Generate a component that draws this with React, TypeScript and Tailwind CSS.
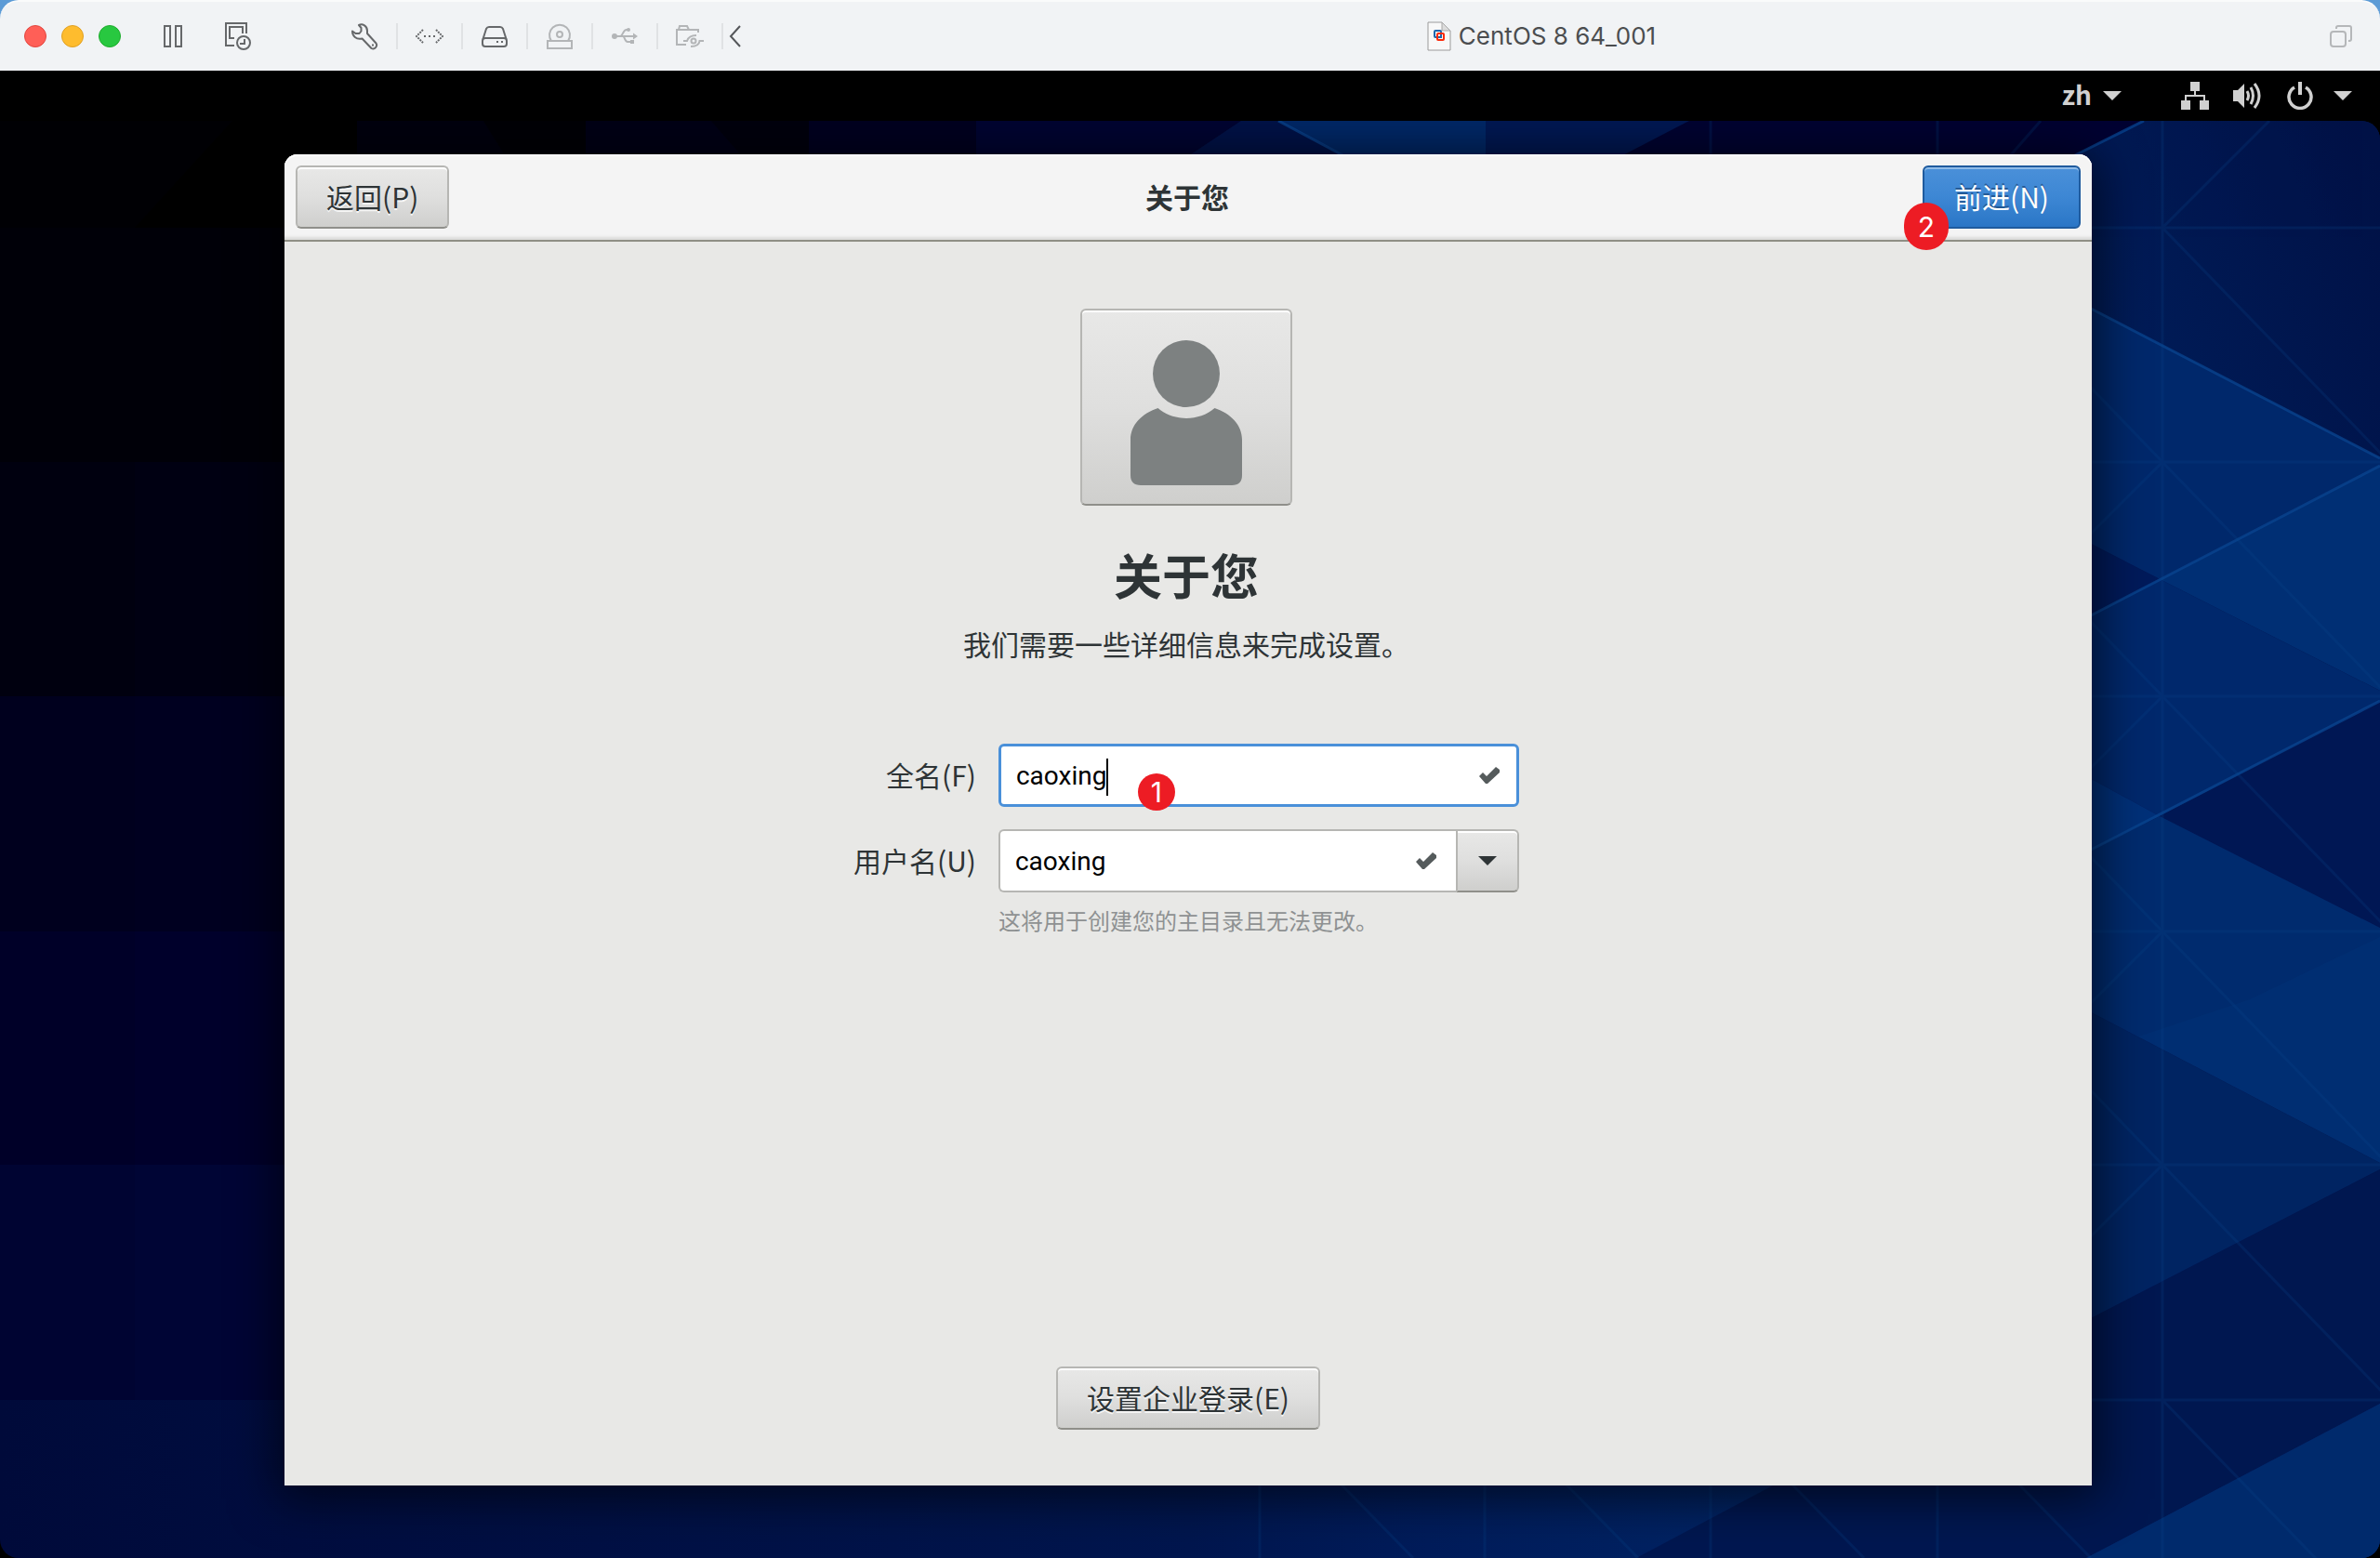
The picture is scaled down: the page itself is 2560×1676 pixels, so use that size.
import type { ReactNode } from "react";

function Wallpaper() {
  const rows = [245, 497, 749, 1002, 1253, 1506];
  const cols = [1355, 1597, 1840, 2084];
  return (
    <svg
      className="absolute inset-0 h-full w-full"
      viewBox="0 130 2560 1546"
      preserveAspectRatio="none"
      aria-hidden="true"
    >
      <defs>
        <linearGradient id="base" x1="0" y1="0" x2="1" y2="0">
          <stop offset="0" stopColor="#000008" />
          <stop offset="0.35" stopColor="#000018" />
          <stop offset="0.55" stopColor="#001040" />
          <stop offset="0.9" stopColor="#001a54" />
          <stop offset="1" stopColor="#001348" />
        </linearGradient>
        <linearGradient id="corner" gradientUnits="userSpaceOnUse" x1="2250" y1="300" x2="2560" y2="180">
          <stop offset="0" stopColor="#001c58" />
          <stop offset="1" stopColor="#001146" />
        </linearGradient>
        <linearGradient id="floor" x1="0" y1="0" x2="1" y2="0">
          <stop offset="0" stopColor="#000a3a" />
          <stop offset="0.5" stopColor="#00164e" />
          <stop offset="0.6" stopColor="#001c5a" />
          <stop offset="0.75" stopColor="#002464" />
        </linearGradient>
      </defs>
      <rect x="0" y="130" width="2560" height="1546" fill="url(#base)" />
      <rect x="0" y="130" width="400" height="115" fill="#000004" />
      <rect x="0" y="245" width="400" height="252" fill="#000008" />
      <rect x="0" y="497" width="400" height="252" fill="#00000f" />
      <rect x="0" y="749" width="400" height="253" fill="#00001e" />
      <rect x="0" y="1002" width="400" height="251" fill="#000028" />
      <rect x="0" y="1253" width="400" height="253" fill="#000432" />
      <rect x="145" y="497" width="200" height="252" fill="#000012" />
      <rect x="145" y="749" width="200" height="253" fill="#000020" />
      <rect x="145" y="1002" width="200" height="251" fill="#00002b" />
      <rect x="145" y="1253" width="200" height="253" fill="#000535" />
      <path d="M250 130H384V245H145z" fill="#000000" />
      <path d="M384 130H520L545 170H384z" fill="#00000e" />
      <path d="M520 130H630V170H545z" fill="#000006" />
      <path d="M630 130H765L800 170H630z" fill="#000016" />
      <path d="M765 130H870V170H800z" fill="#00000d" />
      <path d="M870 130H1050V170H870z" fill="#000020" />
      <path d="M1050 130H1335L1275 170H1050z" fill="#000432" />
      <path d="M1335 130H1375L1450 170H1275z" fill="#001248" />
      <path d="M1375 130H1598V170H1453z" fill="#002868" />
      <path d="M1598 130H1817L1740 170H1598z" fill="#001854" />
      <path d="M1817 130H2306L2226 170H1740z" fill="#000332" />
      <path d="M2306 130H2560V493L2226 320V170z" fill="url(#corner)" />
      <rect x="0" y="1506" width="2560" height="170" fill="url(#floor)" />

      <path d="M2226 320L2560 493V501L2323 623L2226 573z" fill="#00286b" />
      <path d="M2226 573L2323 623L2226 674z" fill="#001a5a" />
      <path d="M2323 623L2560 501V743z" fill="#002f74" />
      <path d="M2226 674L2323 623L2560 743V754L2323 878L2226 825z" fill="#00286c" />
      <path d="M2226 825L2323 878L2226 926z" fill="#003078" />
      <path d="M2323 878L2560 754V998z" fill="#001754" />
      <path d="M2226 926L2323 878L2560 998V1251L2226 1077z" fill="#002b6e" />
      <path d="M2300 1115L2420 1075L2560 1008V1251z" fill="#003074" opacity="0.7" />
      <path d="M2226 1077L2560 1251V1258L2226 1430z" fill="#002462" />
      <path d="M1760 1676L1907 1598L2226 1430L2560 1258V1510L2244 1676z" fill="#001750" />
      <path d="M2244 1676L2560 1510V1676z" fill="#002a6c" />

      <g stroke="#0a4690" strokeWidth="3" fill="none" opacity="0.75">
        <path d="M1375 130L1450 170M2306 130L2226 170M2226 320L2560 493M2226 674L2560 501M2226 926L2560 754" />
      </g>
      <g stroke="#0a4a90" strokeWidth="3" fill="none" opacity="0.2">
        {rows.map((y) => (
          <path key={y} d={`M2226 ${y}H2560M2326 ${y}L2566 ${y + 248}`} />
        ))}
        {rows.slice(1, 5).map((y) => (
          <path key={y} d={`M2226 ${y - 104}L2326 ${y}L2226 ${y + 100}`} />
        ))}
        {cols.map((x) => (
          <path key={x} d={`M${x} 1590V1676M${x + 81} 1590L${x + 165} 1676`} />
        ))}
        <path d="M2326 130V1676M2326 245L2441 130M1840 130V170M2084 130V170M2195 130L2160 170" />
      </g>
    </svg>
  );
}

function ToolCell({ label, children }: { label: string; children: ReactNode }) {
  return (
    <>
      <button type="button" aria-label={label} className="flex h-9 w-[68px] items-center justify-center">
        {children}
      </button>
      <span className="h-7 w-0.5 bg-[#e0e2e4]" />
    </>
  );
}

const dark = "#66686a";
const dim = "#b3b5b7";

function TitleBar() {
  return (
    <header className="bg-gradient-to-br from-[#5c9bd6] via-[#5c9bd6] to-[#6fa3d8]">
      <div className="flex h-[76px] items-center rounded-t-[20px] border-t-2 border-[#fafbfb] bg-[#f1f3f5] pr-[30px] pl-[26px]">
        <div className="flex gap-4">
          <button type="button" aria-label="关闭" className="size-6 rounded-full border border-[#e2463f] bg-[#ff5f57]" />
          <button type="button" aria-label="最小化" className="size-6 rounded-full border border-[#e0a023] bg-[#febc2e]" />
          <button type="button" aria-label="缩放" className="size-6 rounded-full border border-[#1eac2c] bg-[#28c840]" />
        </div>
        <button type="button" aria-label="暂停" className="ml-[46px]">
          <svg width="20" height="24" fill="none" stroke={dark} strokeWidth="2">
            <path d="M1 1h6v22H1zM13 1h6v22h-6z" />
          </svg>
        </button>
        <button type="button" aria-label="快照" className="ml-[46px]">
          <svg width="28" height="30" fill="none" stroke={dark} strokeWidth="2">
            <path d="M10 25H1V1h22v11M10 17H5V5h14v7" />
            <circle cx="20" cy="22" r="7" />
            <path d="M21 18v5h-5" />
          </svg>
        </button>
        <div className="ml-[88px] flex items-center">
          <ToolCell label="设置">
            <svg width="29" height="29" fill="none" stroke={dark} strokeWidth="2" strokeLinejoin="round">
              <path d="M8 2C12 0 17 3 17 8V11L26.500 21.500C28.500 24.500 25 29 21.500 27L11.500 16.500C5 18 1 13.500 1 8.500L4.500 11H8.500L10.500 8.500V5z" />
              <path d="M22 23.500h2" />
            </svg>
          </ToolCell>
          <ToolCell label="网络">
            <svg width="30" height="16" fill="none" stroke={dark} strokeWidth="2">
              <path d="M8 1L1 8L8 15M22 1L29 8L22 15" strokeDasharray="2 1" />
              <path d="M9 8h2M14 8h2M19 8h2" />
            </svg>
          </ToolCell>
          <ToolCell label="硬盘">
            <svg width="28" height="24" fill="none" stroke={dark} strokeWidth="2" strokeLinejoin="round">
              <path d="M1.500 15L5 4Q6 2 8 2H20Q22 2 23 4L26.500 15" />
              <rect x="1" y="14" width="26" height="9" rx="3" />
              <path d="M16 18h2M21 18h2" />
            </svg>
          </ToolCell>
          <ToolCell label="光盘">
            <svg width="28" height="28" fill="none" stroke={dim} strokeWidth="2">
              <path d="M5 19A11 11 0 1 1 23 19" />
              <circle cx="14" cy="12" r="3" />
              <path d="M1 19h26v8H1z" />
            </svg>
          </ToolCell>
          <ToolCell label="USB">
            <svg width="28" height="20" fill="none" stroke={dim} strokeWidth="2">
              <path d="M3 10H24M9 10C12 10 12 3 16 3H18M12 10C14 10 14 16 17 16H20" />
              <g fill={dim} stroke="none">
                <circle cx="3" cy="10" r="3" />
                <circle cx="18" cy="3" r="2" />
                <path d="M20 14h4v4h-4zM23 6.500l5 3.500-5 3.500z" />
              </g>
            </svg>
          </ToolCell>
          <ToolCell label="共享文件夹">
            <svg width="30" height="24" fill="none" stroke={dim} strokeWidth="2">
              <path d="M24 8V5H14L12 1H4L3 5H1V21H11M1 5H14" />
              <circle cx="19" cy="17" r="2.500" />
              <path d="M8 17H12Q14 11 22 11M16 23Q25 23 25.500 17H30" />
            </svg>
          </ToolCell>
          <button type="button" aria-label="收起" className="ml-1.5">
            <svg width="14" height="24" fill="none" stroke="#55575a" strokeWidth="2">
              <path d="M12 1L2 12L12 23" />
            </svg>
          </button>
        </div>
        <div className="flex flex-1 items-center justify-center gap-2 pl-3">
          <svg width="26" height="32" aria-hidden="true">
            <path d="M1 1H16L25 10V31H1z" fill="#f8f8f8" stroke="#9b9b9b" />
            <path d="M16 1V10H25z" fill="#dcdcdc" stroke="#a8a8a8" />
            <rect x="8" y="10" width="7" height="7" rx="1" fill="none" stroke="#1e66ad" strokeWidth="2" />
            <rect x="11" y="13" width="7" height="7" rx="1" fill="none" stroke="#fb2b0a" strokeWidth="2" />
            <path d="M12 17h3v-2" fill="none" stroke="#1e66ad" strokeWidth="2" />
          </svg>
          <h1 className="font-[Inter,sans-serif] text-[26px] leading-8 text-[#4b4d4f]">CentOS 8 64_001</h1>
        </div>
        <button type="button" aria-label="窗口">
          <svg width="24" height="24" fill="none" stroke="#b5b7b9" strokeWidth="2">
            <rect x="1" y="7" width="16" height="16" rx="3" />
            <path d="M7 4V3Q7 1 9 1H21Q23 1 23 3V15Q23 17 21 17H20" />
          </svg>
        </button>
      </div>
    </header>
  );
}

function Triangle({ color }: { color: string }) {
  return (
    <svg width="20" height="10" aria-hidden="true">
      <path d="M0 0H20L10 10z" fill={color} />
    </svg>
  );
}

function TopPanel() {
  return (
    <nav className="flex h-[54px] items-center justify-end bg-black pr-[30px] text-[#d0d0d0]">
      <button type="button" className="flex items-center gap-3 text-[28px] leading-10 font-bold">
        <span className="pb-1">zh</span>
        <Triangle color="#d0d0d0" />
      </button>
      <button type="button" aria-label="系统菜单" className="ml-16 flex items-center">
        <svg width="30" height="30" fill="#d0d0d0">
          <path d="M10 0h10v10h-4v4h10v6h4v10H20V20h4v-4H6v4h4v10H0V20h4v-6h10v-4h-4z" />
        </svg>
        <svg width="30" height="30" className="ml-[26px]" fill="none" stroke="#d0d0d0" strokeWidth="3">
          <path d="M0 9H5L12 2V28L5 21H0z" fill="#d0d0d0" stroke="none" />
          <path d="M15 10Q18 15 15 20" />
          <path d="M19 6Q24 15 19 24" />
          <path d="M23 2Q33 15 23 28" />
        </svg>
        <svg width="30" height="30" className="ml-7" fill="none" stroke="#d0d0d0" strokeWidth="4">
          <path d="M8 6A12 12 0 1 0 20 6" strokeWidth="3.500" />
          <path d="M14 0V14" />
        </svg>
        <span className="ml-5">
          <Triangle color="#d0d0d0" />
        </span>
      </button>
    </nav>
  );
}

function Badge({ className, children }: { className: string; children: ReactNode }) {
  return (
    <span
      className={`absolute flex items-center justify-center rounded-full bg-[#ed1c24] font-[Inter,sans-serif] text-[30px] leading-none text-white ${className}`}
    >
      {children}
    </span>
  );
}

function Check({ className }: { className: string }) {
  return (
    <svg width="24" height="20" className={`absolute top-6 ${className}`} aria-hidden="true">
      <path d="M1 11L5 7L9 11L19 1L23 4V7L10 19H8z" fill="#555b5c" />
    </svg>
  );
}

const greyButton =
  "h-[68px] rounded-md border-2 border-[#b6b6b3] border-b-[#8f8f8a] bg-gradient-to-b from-[#e8e8e7] via-[#dfdfde] to-[#cfcfcd] px-[31px] pb-0.5 text-[30px] leading-10 text-[#2e3436] shadow-[inset_0_2px_#ffffff] [text-shadow:0_2px_rgba(255,255,255,0.75)]";

const entry =
  "h-[68px] w-full bg-white pl-4 font-[Roboto,sans-serif] text-[28px] leading-10 text-black outline-none";

export default function App() {
  return (
    <div className="flex min-h-screen flex-col bg-black font-['Noto_Sans_CJK_SC',sans-serif]">
      <TitleBar />
      <TopPanel />
      <main className="relative flex flex-1 flex-col overflow-hidden rounded-tr-[20px] rounded-b-[20px] pt-9 pr-[310px] pb-[78px] pl-[306px]">
        <Wallpaper />
        <section className="relative flex flex-1 flex-col rounded-t-[14px] bg-[#e8e8e6] shadow-[0_6px_50px_8px_rgba(0,0,0,0.6)]">
          <div className="grid grid-cols-[1fr_auto_1fr] items-center rounded-t-[14px] border-b-2 border-[#8f8f85] bg-[#f4f4f4] px-3 pt-3 pb-3 shadow-[inset_0_2px_#ffffff,inset_0_-4px_3px_-1px_#dcdcda]">
            <button type="button" className={`justify-self-start ${greyButton}`}>
              返回(P)
            </button>
            <h2 className="pr-0.5 pb-0.5 text-[30px] leading-10 font-bold text-[#2e3436]">关于您</h2>
            <div className="relative justify-self-end">
              <button
                type="button"
                className="h-[68px] rounded-md border-2 border-[#1f5b9e] bg-gradient-to-b from-[#4a90d9] via-[#3d87d4] to-[#2a76c6] px-8 pb-0.5 text-[30px] leading-10 text-white shadow-[inset_0_2px_#90bce8] [text-shadow:0_-2px_rgba(20,60,110,0.6)]"
              >
                前进(N)
              </button>
              <Badge className="top-10 -left-5 h-[51px] w-12">2</Badge>
            </div>
          </div>

          <div className="flex flex-1 flex-col items-center pt-[72px] pb-[60px]">
            <div className="flex flex-col items-center pr-1">
              <button
                type="button"
                aria-label="头像"
                className="flex h-[212px] w-[228px] items-center justify-center rounded-md border-2 border-[#b6b6b3] border-b-[#8f8f8a] bg-gradient-to-b from-[#e8e8e7] via-[#dfdfde] to-[#cfcfcd] pt-3 shadow-[inset_0_2px_#ffffff]"
              >
                <svg width="120" height="158" aria-hidden="true" fill="#7d8181">
                  <circle cx="60" cy="37" r="36" />
                  <path d="M29.500 74C12 80 0 92 0 108V146Q0 157 11 157H109Q120 157 120 146V108C120 92 108 80 90.500 74C74 88.500 46 88.500 29.500 74z" />
                </svg>
              </button>
              <h3 className="mt-9 text-[52px] leading-[76px] font-bold text-[#2e3436]">关于您</h3>
              <p className="mt-4 text-[30px] leading-10 text-[#2e3436]">我们需要一些详细信息来完成设置。</p>

              <form className="mt-[88px] grid grid-cols-[auto_560px] gap-x-6 gap-y-6 text-[30px] text-[#2e3436]">
                <label htmlFor="fullname" className="h-[68px] text-right leading-[66px]">
                  全名(F)
                </label>
                <div className="relative">
                  <input
                    id="fullname"
                    type="text"
                    defaultValue="caoxing"
                    className={`${entry} rounded-md border-[3px] border-[#4a90d9]`}
                  />
                  <span className="absolute top-4 left-[116px] h-10 w-0.5 bg-black" />
                  <Check className="right-5" />
                  <Badge className="top-8 left-[150px] size-10">1</Badge>
                </div>
                <label htmlFor="username" className="h-[68px] text-right leading-[66px]">
                  用户名(U)
                </label>
                <div>
                  <div className="flex">
                    <div className="relative flex-1">
                      <input
                        id="username"
                        type="text"
                        defaultValue="caoxing"
                        aria-describedby="username-hint"
                        className={`${entry} rounded-l-md border-2 border-r-0 border-[#b6b6b3]`}
                      />
                      <Check className="right-5" />
                    </div>
                    <button
                      type="button"
                      aria-label="选择用户名"
                      className="flex h-[68px] w-[68px] items-center justify-center rounded-r-md border-2 border-[#b6b6b3] border-b-[#8f8f8a] bg-gradient-to-b from-[#e8e8e7] via-[#dfdfde] to-[#cfcfcd] shadow-[inset_0_2px_#ffffff]"
                    >
                      <Triangle color="#2e3436" />
                    </button>
                  </div>
                  <p id="username-hint" className="mt-3 text-[24px] leading-9 text-[#8e9192]">
                    这将用于创建您的主目录且无法更改。
                  </p>
                </div>
              </form>
            </div>

            <button type="button" className={`mt-auto ${greyButton}`}>
              设置企业登录(E)
            </button>
          </div>
        </section>
      </main>
    </div>
  );
}
